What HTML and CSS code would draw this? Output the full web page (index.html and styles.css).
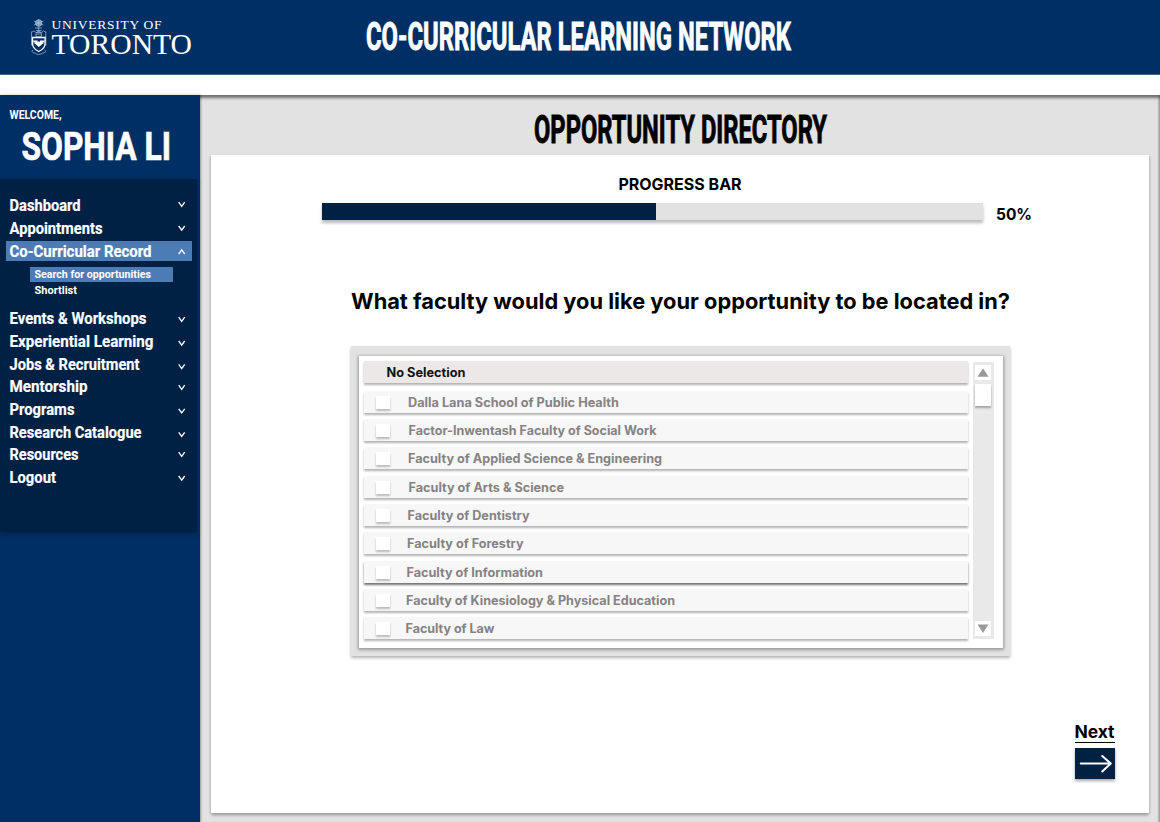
FILE: index.html
```html
<!DOCTYPE html>
<html lang="en">
<head>
<meta charset="utf-8">
<title>Co-Curricular Learning Network</title>
<link rel="stylesheet" href="styles.css">
</head>
<body>
<header class="top">
  <svg class="logo" width="166" height="40" viewBox="30 17 166 40">
    <g fill="none" stroke="#a9c1da" stroke-width=".7">
      <circle cx="38.7" cy="23" r="3.2" fill="#6f91b5"/>
      <path d="M34 21.2l9.4 3.8M34 25l9.4-4M38.7 19v9M35 28h7M36 30.500h5.500M38.700 28v4M32 32l2-1 2 1.500h5.500l2-1.500 2 1M31.500 31.500v14M45.800 31.500v14"/>
      <path d="M36 33.500c1-3 4.500-3 5.500 0M36 34h5.500v2.500H36zM33 50c-2 1-1 3 2 3 2 2 5.500 2 7.500 0 3 0 4-2 2-3"/>
    </g>
    <path d="M32.500 37.500h12.600v5.800c0 4-2.500 6.500-6.300 8.200-3.800-1.700-6.300-4.200-6.300-8.200z" fill="#002f65" stroke="#fff" stroke-width="1.300"/>
    <path d="M33 40.500h4.500v2h-4zM40 40.500h4.700l-.5 2H40zM34 43l4.800-1.500 4.900 1.500-4.900 4z" fill="#fff"/>
    <text class="serif small-cap" x="51.500" y="29" textLength="110" lengthAdjust="spacing">UNIVERSITY OF</text>
    <text class="serif large-cap" x="51.500" y="54.300" textLength="140.500" lengthAdjust="spacingAndGlyphs">TORONTO</text>
  </svg>
  <svg class="site-title" width="428" height="40"><text x="1" y="33" textLength="425" lengthAdjust="spacingAndGlyphs">CO-CURRICULAR LEARNING NETWORK</text></svg>
</header>
<div class="body">
  <aside class="sidebar">
    <div class="user">
      <svg width="192" height="84">
        <text class="welcome" x="9.500" y="24" textLength="52" lengthAdjust="spacingAndGlyphs">WELCOME,</text>
        <text class="name" x="21.500" y="65" textLength="149.500" lengthAdjust="spacingAndGlyphs">SOPHIA LI</text>
      </svg>
    </div>
    <nav class="menu">
      <svg class="item"><text x="9.500" y="16.700" textLength="71" lengthAdjust="spacingAndGlyphs">Dashboard</text><path d="M178.700 8.200l3 4.200 3-4.200"/></svg>
      <svg class="item"><text x="9.500" y="16.700" textLength="93" lengthAdjust="spacingAndGlyphs">Appointments</text><path d="M178.700 9l3 4.200 3-4.200"/></svg>
      <svg class="item"><rect x="6" y="1" width="186" height="20"/><text x="9.500" y="16.700" textLength="142" lengthAdjust="spacingAndGlyphs">Co-Curricular Record</text><path d="M178.700 14l3-4.200 3 4.200"/></svg>
      <div class="submenu">
        <svg class="sub"><rect x="30" y="0" width="143" height="15"/><text x="34.500" y="11.300" textLength="116.500" lengthAdjust="spacingAndGlyphs">Search for opportunities</text></svg>
        <svg class="sub"><text x="34.500" y="11.300" textLength="42.500" lengthAdjust="spacingAndGlyphs">Shortlist</text></svg>
      </div>
      <svg class="item"><text x="9.500" y="16.700" textLength="137" lengthAdjust="spacingAndGlyphs">Events &amp; Workshops</text><path d="M178.700 10.200l3 4.200 3-4.200"/></svg>
      <svg class="item"><text x="9.500" y="16.700" textLength="144" lengthAdjust="spacingAndGlyphs">Experiential Learning</text><path d="M178.700 11l3 4.200 3-4.200"/></svg>
      <svg class="item"><text x="9.500" y="16.700" textLength="130" lengthAdjust="spacingAndGlyphs">Jobs &amp; Recruitment</text><path d="M178.700 11.400l3 4.200 3-4.200"/></svg>
      <svg class="item"><text x="9.500" y="16.700" textLength="78" lengthAdjust="spacingAndGlyphs">Mentorship</text><path d="M178.700 10.100l3 4.200 3-4.200"/></svg>
      <svg class="item"><text x="9.500" y="16.700" textLength="65" lengthAdjust="spacingAndGlyphs">Programs</text><path d="M178.700 10.800l3 4.200 3-4.200"/></svg>
      <svg class="item"><text x="9.500" y="16.700" textLength="132" lengthAdjust="spacingAndGlyphs">Research Catalogue</text><path d="M178.700 11.300l3 4.200 3-4.200"/></svg>
      <svg class="item"><text x="9.500" y="16.700" textLength="69" lengthAdjust="spacingAndGlyphs">Resources</text><path d="M178.700 9.200l3 4.200 3-4.200"/></svg>
      <svg class="item"><text x="9.500" y="16.700" textLength="46.500" lengthAdjust="spacingAndGlyphs">Logout</text><path d="M178.700 10l3 4.200 3-4.200"/></svg>
    </nav>
  </aside>
  <main class="main">
    <svg class="page-title" width="296" height="40"><text x="2" y="33" textLength="293" lengthAdjust="spacingAndGlyphs">OPPORTUNITY DIRECTORY</text></svg>
    <section class="card">
      <div class="progress-label">PROGRESS BAR</div>
      <div class="progress">
        <div class="track"><div class="fill" style="width:50.5%"></div></div>
        <span class="percent">50%</span>
      </div>
      <svg class="question" width="662" height="34"><text x="0" y="24" textLength="659" lengthAdjust="spacingAndGlyphs">What faculty would you like your opportunity to be located in?</text></svg>
      <div class="listbox">
        <div class="list">
          <div class="options">
            <svg class="option none"><text x="22.500" y="15.500" textLength="79" lengthAdjust="spacingAndGlyphs">No Selection</text></svg>
            <div class="option"><i></i><svg><text x="44" y="15.500" textLength="211" lengthAdjust="spacingAndGlyphs">Dalla Lana School of Public Health</text></svg></div>
            <div class="option"><i></i><svg><text x="44.500" y="15.500" textLength="248" lengthAdjust="spacingAndGlyphs">Factor-Inwentash Faculty of Social Work</text></svg></div>
            <div class="option"><i></i><svg><text x="44" y="15.500" textLength="254" lengthAdjust="spacingAndGlyphs">Faculty of Applied Science &amp; Engineering</text></svg></div>
            <div class="option"><i></i><svg><text x="44.500" y="15.500" textLength="155.500" lengthAdjust="spacingAndGlyphs">Faculty of Arts &amp; Science</text></svg></div>
            <div class="option"><i></i><svg><text x="43.500" y="15.500" textLength="122" lengthAdjust="spacingAndGlyphs">Faculty of Dentistry</text></svg></div>
            <div class="option"><i></i><svg><text x="43" y="15.500" textLength="116.500" lengthAdjust="spacingAndGlyphs">Faculty of Forestry</text></svg></div>
            <div class="option hover"><i></i><svg><text x="42.500" y="15.500" textLength="136.500" lengthAdjust="spacingAndGlyphs">Faculty of Information</text></svg></div>
            <div class="option"><i></i><svg><text x="42" y="15.500" textLength="269" lengthAdjust="spacingAndGlyphs">Faculty of Kinesiology &amp; Physical Education</text></svg></div>
            <div class="option"><i></i><svg><text x="41.500" y="15.500" textLength="89" lengthAdjust="spacingAndGlyphs">Faculty of Law</text></svg></div>
          </div>
          <div class="scrollbar">
            <svg class="arrow" viewBox="0 0 16 15"><path d="M8 3.300l5.500 8.500h-11z"/></svg>
            <div class="thumb"></div>
            <svg class="arrow down" viewBox="0 0 16 15"><path d="M8 12l5.500-8.500h-11z"/></svg>
          </div>
        </div>
      </div>
      <div class="next">
        <span class="next-label">Next</span>
        <svg class="next-button" viewBox="0 0 40 31"><path d="M5.500 15.500h29.500M27 8l8.500 7.500-8.500 8"/></svg>
      </div>
    </section>
  </main>
</div>
</body>
</html>
```
FILE: styles.css
```css
* { box-sizing: border-box; }
body { margin: 0; width: 1160px; height: 822px; overflow: hidden; background: #fff; font-family: Inter, "Liberation Sans", sans-serif; color: #000; }
svg { display: block; flex: none; overflow: visible; }

.top { display: flex; height: 75px; background: #002f65; border-bottom: 1px solid #426385; }
.logo { margin: 17px 0 0 30px; }
.serif { font-family: "Liberation Serif", serif; fill: #fff; }
.small-cap { font-size: 13.500px; }
.large-cap { font-size: 28.500px; }
.site-title { margin: 17px 0 0 169px; }
.site-title text, .page-title text { font: 700 38.500px Roboto, sans-serif; fill: #fff; stroke: #fff; stroke-width: .9px; }

.body { display: flex; height: 727px; margin-top: 20px; background: #e2e2e2; box-shadow: inset 0 3px 3px rgba(0,0,0,.5), inset -2px 0 1px rgba(0,0,0,.12); }
.sidebar { width: 200px; flex: none; background: #002f65; box-shadow: 1px 0 2px rgba(0,0,0,.35); }
.user { height: 84px; }
.user text, .menu text { font-family: Roboto, sans-serif; font-weight: 700; fill: #fff; }
.user .welcome { font-size: 13px; }
.user .name { font-size: 39.500px; stroke: #fff; stroke-width: .7px; }
.menu { width: 197px; height: 353px; padding-top: 15.300px; background: #002144; box-shadow: 0 2px 4px rgba(0,33,68,.7); }
.item { width: 192px; height: 22.650px; }
.item text { font-size: 17px; stroke: #fff; stroke-width: .2px; }
.item path { fill: none; stroke: #fff; stroke-width: 1.300px; }
.item rect, .sub rect { fill: #4c7cb5; }
.submenu { height: 45.200px; padding-top: 4.800px; }
.sub { width: 192px; height: 16px; }
.sub text { font-size: 11.500px; }

.main { flex: 1; display: flex; flex-direction: column; padding: 15px 11px 9px; }
.page-title { margin-left: 320.500px; }
.page-title text { fill: #000; stroke: #000; }
.card { width: 938px; height: 658px; margin-top: 5px; background: #fff; box-shadow: 0 2px 3px rgba(0,0,0,.35); display: flex; flex-direction: column; padding-left: 111px; }
.progress-label { width: 716px; margin-top: 18.500px; height: 20px; line-height: 20px; text-align: center; font-size: 16px; font-weight: 700; }
.progress { display: flex; height: 30px; margin-top: 9.500px; }
.track { width: 661px; height: 17px; background: #e2e2e2; box-shadow: 0 3px 3px rgba(0,0,0,.27); }
.fill { height: 17px; background: #002144; }
.percent { margin-left: 13px; line-height: 23px; font-size: 15.500px; font-weight: 700; }
.question { margin: 52px 0 0 29px; }
.question text { font-size: 22px; font-weight: 700; }
.listbox { width: 659px; height: 310px; margin: 27px 0 0 29px; padding: 10px 7px 8px 8px; background: #e2e2e2; box-shadow: 0 2px 3px rgba(0,0,0,.3); }
.list { height: 292px; display: flex; gap: 5px; padding: 5px; background: #fff; box-shadow: 0 1px 3px 1px rgba(0,0,0,.32); }
.options { width: 604px; display: flex; flex-direction: column; gap: 6.300px; }
.option { width: 604px; height: 22px; flex: none; display: flex; align-items: center; background: #f7f7f7; box-shadow: 0 2px 2px rgba(0,0,0,.3); }
.option.none { background: #ece8e8; margin-bottom: 1.500px; }
.option.hover { box-shadow: 0 2px 2px rgba(0,0,0,.55); }
.option svg { width: 580px; height: 22px; margin-left: -26px; }
.option i { width: 14px; height: 13px; margin: 1px 0 0 12px; background: #fff; box-shadow: 0 2px 2px rgba(0,0,0,.25); }
.option text { font-size: 12.500px; font-weight: 700; fill: #858283; }
.option.none text { fill: #111; }
.scrollbar { width: 21px; height: 277px; margin-top: 1px; padding: 3px 0 3px 2px; background: #e9e9e9; display: flex; flex-direction: column; }
.arrow { width: 16px; height: 15px; background: #fff; }
.arrow path { fill: #999; }
.arrow.down { margin-top: auto; }
.thumb { width: 16px; height: 22px; margin-top: 4px; background: #fff; box-shadow: 0 2px 2px rgba(0,0,0,.3); }
.next { width: 40.500px; margin: 65px 0 0 752.500px; }
.next-label { display: block; height: 21.500px; line-height: 21px; font-size: 17.500px; font-weight: 700; letter-spacing: -.1px; border-bottom: 1.500px solid #000; }
.next-button { width: 40.500px; height: 31px; margin-top: 5.500px; background: #002144; box-shadow: 0 2px 3px rgba(0,0,0,.35); }
.next-button path { fill: none; stroke: #fff; stroke-width: 2px; stroke-linecap: round; stroke-linejoin: round; }
```
